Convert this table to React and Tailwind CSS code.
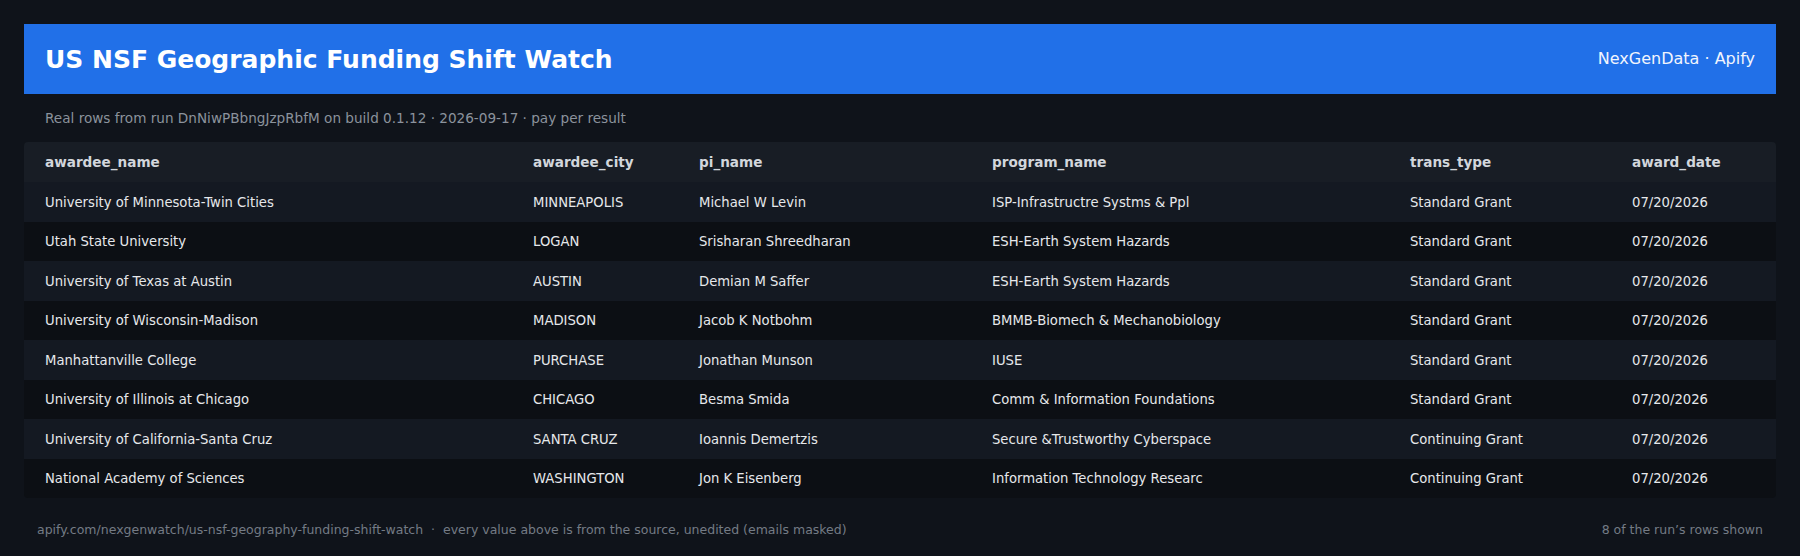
import React from "react";

const rows = [
  ["University of Minnesota-Twin Cities", "MINNEAPOLIS", "Michael W Levin", "ISP-Infrastructre Systms & Ppl", "Standard Grant", "07/20/2026"],
  ["Utah State University", "LOGAN", "Srisharan Shreedharan", "ESH-Earth System Hazards", "Standard Grant", "07/20/2026"],
  ["University of Texas at Austin", "AUSTIN", "Demian M Saffer", "ESH-Earth System Hazards", "Standard Grant", "07/20/2026"],
  ["University of Wisconsin-Madison", "MADISON", "Jacob K Notbohm", "BMMB-Biomech & Mechanobiology", "Standard Grant", "07/20/2026"],
  ["Manhattanville College", "PURCHASE", "Jonathan Munson", "IUSE", "Standard Grant", "07/20/2026"],
  ["University of Illinois at Chicago", "CHICAGO", "Besma Smida", "Comm & Information Foundations", "Standard Grant", "07/20/2026"],
  ["University of California-Santa Cruz", "SANTA CRUZ", "Ioannis Demertzis", "Secure &Trustworthy Cyberspace", "Continuing Grant", "07/20/2026"],
  ["National Academy of Sciences", "WASHINGTON", "Jon K Eisenberg", "Information Technology Researc", "Continuing Grant", "07/20/2026"],
];

const headers = ["awardee_name", "awardee_city", "pi_name", "program_name", "trans_type", "award_date"];

const grid = "grid grid-cols-[488px_166px_293px_418px_222px_1fr]";

export default function App() {
  return (
    <div
      className="w-[1800px] h-[556px] bg-[#0f131a] px-6 pt-6 overflow-hidden"
      style={{ fontFamily: '"DejaVu Sans", sans-serif' }}
    >
      <div className="h-[70px] bg-[#2170e8] flex items-center justify-between px-[21px]">
        <h1 className="text-[25px] font-bold text-white leading-none">US NSF Geographic Funding Shift Watch</h1>
        <span className="text-[16px] text-[#f1f5fd]">NexGenData · Apify</span>
      </div>
      <div className="h-[48px] flex items-center px-[21px] text-[13.6px] text-[#8b929c]">
        Real rows from run DnNiwPBbngJzpRbfM on build 0.1.12 · 2026-09-17 · pay per result
      </div>
      <div className="rounded-[4px] overflow-hidden">
        <div className={`${grid} h-[40px] items-center bg-[#181d25] text-[13.6px] font-bold text-[#d2d6dc]`}>
          {headers.map((h) => (
            <div key={h} className="px-[21px]">{h}</div>
          ))}
        </div>
        {rows.map((r, i) => (
          <div
            key={i}
            className={`${grid} h-[39.5px] items-center text-[13.2px] text-[#e6e8eb] ${i % 2 === 0 ? "bg-[#141922]" : "bg-[#0c0f14]"}`}
          >
            {r.map((c, j) => (
              <div key={j} className="px-[21px] pt-[2px] whitespace-nowrap">{c}</div>
            ))}
          </div>
        ))}
      </div>
      <div className="flex justify-between items-center h-[64px] px-[13px] text-[12.5px] text-[#747b85]">
        <span>apify.com/nexgenwatch/us-nsf-geography-funding-shift-watch&nbsp;&nbsp;·&nbsp;&nbsp;every value above is from the source, unedited (emails masked)</span>
        <span>8 of the run’s rows shown</span>
      </div>
    </div>
  );
}
